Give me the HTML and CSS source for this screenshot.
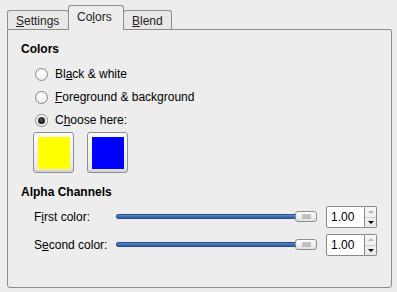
FILE: index.html
```html
<!DOCTYPE html>
<html>
<head>
<meta charset="utf-8">
<link rel="stylesheet" href="styles.css">
</head>
<body>
<div class="notebook">
  <div class="tabs">
    <div class="tab tab-settings"><u>S</u>ettings</div>
    <div class="tab tab-colors active">Co<u>l</u>ors</div>
    <div class="tab tab-blend"><u>B</u>lend</div>
  </div>
  <div class="panel">
    <div class="section-title">Colors</div>
    <div class="radios">
      <div class="radio-row"><span class="radio"></span><span>Bl<u>a</u>ck &amp; white</span></div>
      <div class="radio-row"><span class="radio"></span><span><u>F</u>oreground &amp; background</span></div>
      <div class="radio-row"><span class="radio checked"></span><span>C<u>h</u>oose here:</span></div>
    </div>
    <div class="swatches">
      <div class="color-btn"><div class="swatch yellow"></div></div>
      <div class="color-btn"><div class="swatch blue"></div></div>
    </div>
    <div class="section-title alpha-title">Alpha Channels</div>
    <div class="alpha-rows">
      <div class="alpha-row">
        <span class="alpha-label">F<u>i</u>rst color:</span>
        <div class="slider"><div class="track"></div><div class="thumb"></div></div>
        <div class="spin"><div class="entry">1.00</div><div class="spin-btns"><span class="up"></span><span class="down"></span></div></div>
      </div>
      <div class="alpha-row">
        <span class="alpha-label">S<u>e</u>cond color:</span>
        <div class="slider"><div class="track"></div><div class="thumb"></div></div>
        <div class="spin"><div class="entry">1.00</div><div class="spin-btns"><span class="up"></span><span class="down"></span></div></div>
      </div>
    </div>
  </div>
</div>
</body>
</html>
```

FILE: styles.css
```css
* { box-sizing: border-box; }
body {
  margin: 0;
  background: #ededed;
  font: 12px/14px "Liberation Sans", Arial, sans-serif;
  color: #000;
}
u { text-decoration: underline; text-underline-offset: 1px; }
.notebook {
  padding: 5px 0 0 7px;
  width: 392px;
}
.tabs {
  display: flex;
  align-items: flex-end;
  height: 24px;
  position: relative;
  z-index: 1;
}
.tab {
  height: 19px;
  padding: 3px 0 0 8px;
  border: 1px solid #8e8e8e;
  border-bottom: none;
  border-radius: 3px 3px 0 0;
  background: #e8e8e8;
  color: #222;
}
.tab-settings { width: 62px; }
.tab-colors { width: 56px; }
.tab-blend { width: 49px; }
.tab + .tab { margin-left: -1px; }
.tab.active {
  height: 25px;
  margin-bottom: -1px;
  padding-top: 4px;
  background: #ededed;
  position: relative;
  z-index: 2;
}
.panel {
  width: 385px;
  height: 259px;
  border: 1px solid #8c8c8c;
  border-radius: 0 2px 3px 3px;
  padding: 12px 13px 0;
}
.section-title { font-weight: bold; }
.radios {
  margin-top: 6px;
  padding-left: 12px;
}
.radio-row {
  height: 23px;
  display: flex;
  align-items: center;
  gap: 7px;
}
.radio {
  width: 13px;
  height: 13px;
  margin-left: 2px;
  margin-top: 1px;
  border: 1px solid #8a8a8a;
  border-radius: 50%;
  background: radial-gradient(circle at 50% 35%, #ffffff 0%, #f4f4f4 55%, #dedede 100%);
  display: flex;
  align-items: center;
  justify-content: center;
}
.radio.checked::after {
  content: "";
  width: 7px;
  height: 7px;
  border-radius: 50%;
  background: radial-gradient(circle at 45% 40%, #555 0%, #111 70%);
}
.swatches {
  display: flex;
  gap: 13px;
  margin-top: 1px;
  padding-left: 12px;
}
.color-btn {
  width: 41px;
  height: 41px;
  border: 1px solid #8e8e8e;
  border-radius: 3px;
  padding: 4px 3px 3px 4px;
  background: linear-gradient(#fbfbfb, #e6e6e6);
  box-shadow: inset 0 -2px 0 #d4d4d4;
}
.swatch { width: 32px; height: 32px; }
.yellow { background: #ffff00; }
.blue { background: #0000ff; }
.alpha-title { margin-top: 12px; }
.alpha-rows {
  margin-top: 7px;
  padding-left: 12px;
  display: flex;
  flex-direction: column;
  gap: 6px;
}
.alpha-row {
  height: 22px;
  display: flex;
  align-items: center;
}
.alpha-label {
  width: 83px;
  padding-left: 1px;
}
.slider {
  width: 201px;
  height: 12px;
  display: flex;
  align-items: center;
  margin-top: -1px;
}
.track {
  flex: 1;
  height: 5px;
  margin-right: -1px;
  background: linear-gradient(#5a8ed4, #3a6cb4 60%, #2f5ea2);
  border: 1px solid #2c4e80;
  border-radius: 2px 0 0 2px;
}
.thumb {
  width: 22px;
  height: 11px;
  border: 1px solid #8d8d8d;
  border-radius: 3px;
  background: linear-gradient(#fdfdfd, #e2e2e2);
  position: relative;
}
.thumb::after {
  content: "";
  position: absolute;
  left: 6px;
  top: 2px;
  width: 9px;
  height: 5px;
  background-image: radial-gradient(circle, #8a8a8a 0.6px, transparent 0.8px);
  background-size: 2px 2px;
}
.spin {
  display: flex;
  margin-left: 9px;
  height: 22px;
}
.entry {
  width: 39px;
  height: 22px;
  border: 1px solid #8a8a8a;
  border-radius: 2px 0 0 2px;
  background: #fff;
  padding: 3px 0 0 4px;
  line-height: 14px;
}
.spin-btns {
  width: 12px;
  height: 22px;
  border: 1px solid #8a8a8a;
  border-left: none;
  border-radius: 0 2px 2px 0;
  background: linear-gradient(#f7f7f7, #e8e8e8);
  display: flex;
  flex-direction: column;
}
.spin-btns span {
  flex: 1;
  display: flex;
  align-items: center;
  justify-content: center;
}
.spin-btns .up { border-bottom: 1px solid #d0d0d0; }
.spin-btns .up::after {
  content: "";
  border-left: 3px solid transparent;
  border-right: 3px solid transparent;
  border-bottom: 3px solid #b8b8b8;
}
.spin-btns .down::after {
  content: "";
  border-left: 3px solid transparent;
  border-right: 3px solid transparent;
  border-top: 3px solid #000;
}
```
